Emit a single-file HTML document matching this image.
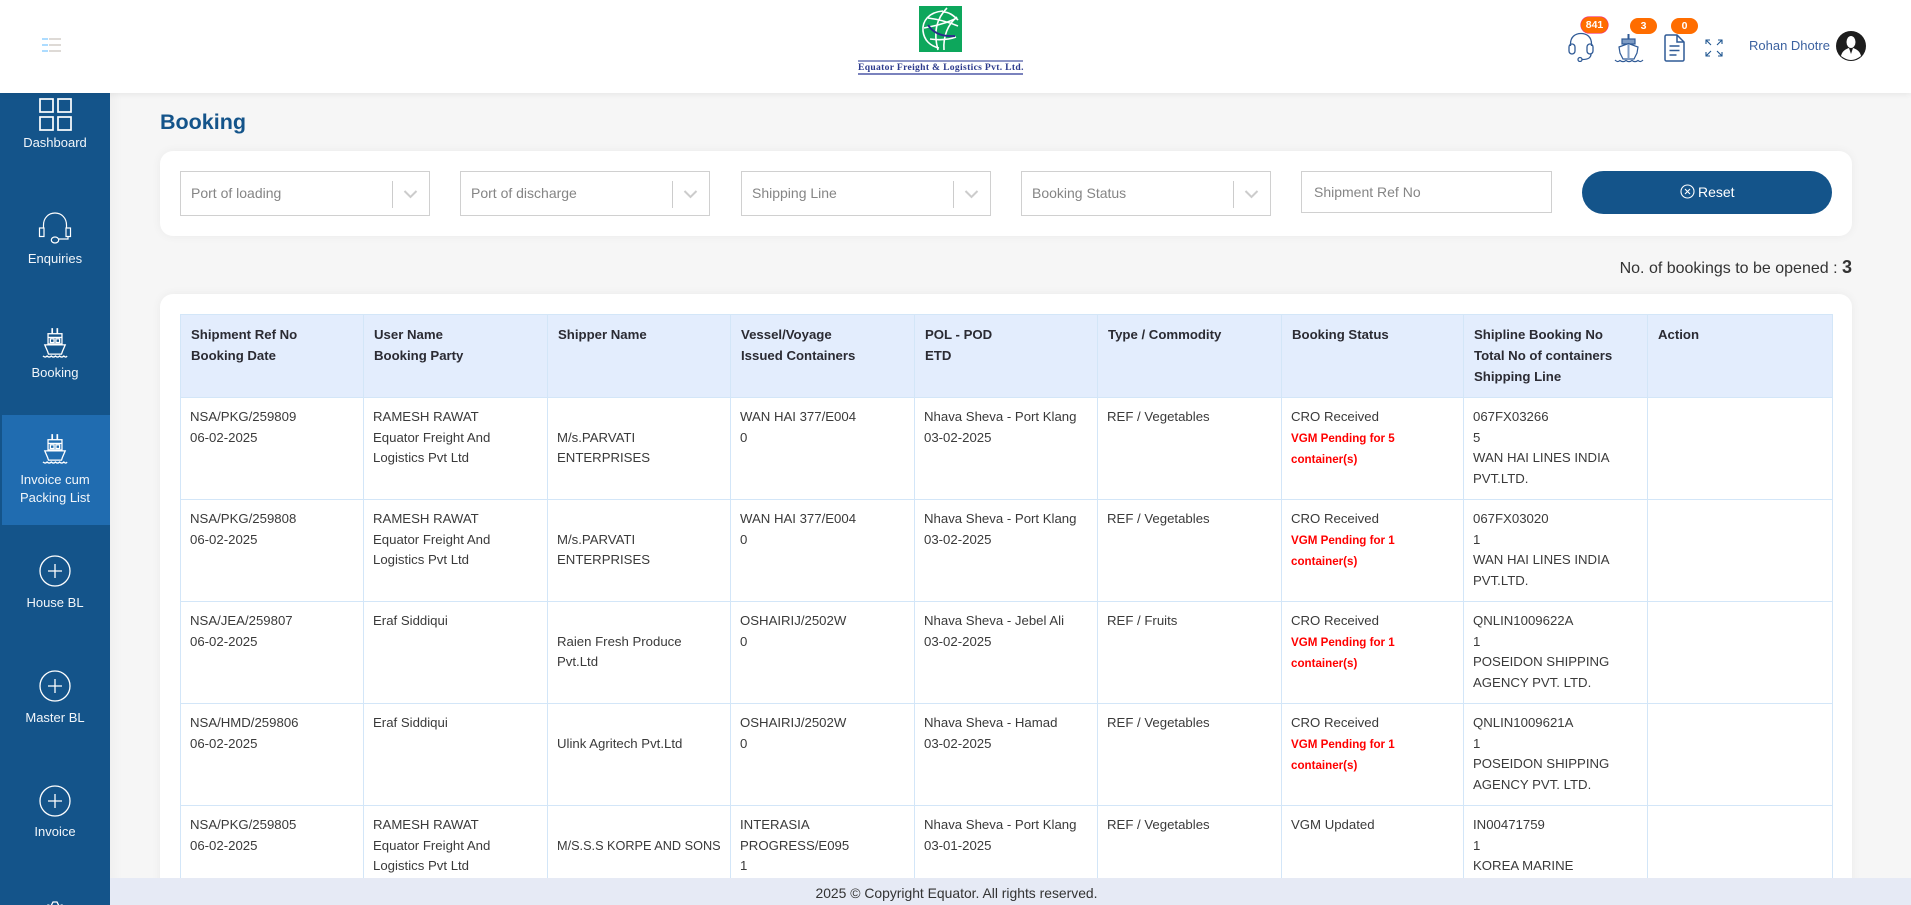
<!DOCTYPE html>
<html><head><meta charset="utf-8"><title>Booking</title>
<style>
*{box-sizing:border-box}
html,body{margin:0;padding:0;width:1911px;height:905px;overflow:hidden;background:#f6f6f6;font-family:"Liberation Sans",sans-serif;color:#333}
#wrap{position:absolute;left:0;top:0;width:1911px;height:905px;overflow:hidden}
#clip{position:absolute;left:0;top:0;width:1911px;height:878px;overflow:hidden}
.abs{position:absolute}
#hdr{position:absolute;left:0;top:0;width:1911px;height:93px;background:#fff;box-shadow:0 1px 6px rgba(0,0,0,.07);z-index:5}
#side{position:absolute;left:0;top:93px;width:110px;height:812px;background:#14548a;overflow:hidden;z-index:4}
.lbl{position:absolute;left:0;width:110px;text-align:center;color:#f2f6fa;font-size:13px;line-height:18px;white-space:nowrap}
.card{position:absolute;left:160px;width:1692px;background:#fff;border-radius:13px;box-shadow:0 0 10px rgba(0,0,0,.05)}
.sel{position:absolute;top:171px;width:250px;height:45px;border:1px solid #d0d0d0;background:#fff;color:#858585;font-size:14px;line-height:43px;padding-left:10px}
.sel i{position:absolute;left:211px;top:9px;width:1px;height:27px;background:#ccc}
.sel svg{position:absolute;left:222px;top:18px}
#tbl{position:absolute;left:180px;top:314px;border-collapse:collapse;table-layout:fixed;width:1652px;font-size:13.2px}
#tbl td,#tbl th{border:1px solid #d3e6f8;vertical-align:top;white-space:nowrap;line-height:20.5px;overflow:hidden}
#tbl th{height:83px;background:#e3edfd;text-align:left;font-weight:bold;color:#2b2b33;padding:9px 10px 0 10px;line-height:21px;font-size:13.2px}
#tbl td{height:102px;padding:9px 9px 0 9px;color:#3a3a3a;background:#fff}
.r{color:#f00;font-weight:bold;font-size:11.6px}
.badge{position:absolute;width:27px;height:16px;border-radius:8px;background:#ff6d00;color:#fff;font-weight:bold;font-size:10.5px;line-height:16px;text-align:center}
#foot{position:absolute;left:110px;top:878px;width:1801px;height:27px;background:#e6eaf5;text-align:center;font-size:13.9px;line-height:30px;color:#333;z-index:3;padding-right:108px}
</style></head><body>
<div id="wrap">
<div class="abs" style="left:110px;top:93px;width:12px;height:812px;background:linear-gradient(90deg,#f0f0f0,#f6f6f6)"></div>

<div id="hdr">
  <svg class="abs" style="left:42px;top:38px" width="20" height="14"><g stroke-width="1.3"><path d="M0 1h6M0 7h6M0 13h6" stroke="#7cc8ff"/><path d="M7 1h12M7 7h12M7 13h12" stroke="#c9c4be"/></g></svg>

  <svg class="abs" style="left:919px;top:6px" width="43" height="46" viewBox="0 0 43 46">
    <rect width="43" height="46" fill="#0da75c"/>
    <g fill="none" stroke="#fff" stroke-width="1.6">
      <path d="M24 5C10 6 3 15 4 25c1 9 7 15 16 17"/>
      <path d="M9 12c8 1 18 3 30 8"/><path d="M5 22c10-2 20-4 31-9"/>
      <path d="M28 2C18 12 14 26 19 44"/><path d="M38 11C29 18 24 30 25 44"/>
      <path d="M11 33c8 1 18 1 26-2"/><path d="M24 6c6 0 10 3 15 8"/>
    </g>
    <path d="M9 19c6 9 15 12 27 11" fill="none" stroke="#2b2c8c" stroke-width="2"/>
  </svg>
  <div class="abs" style="left:858px;top:60px;width:165px;height:15px;border-top:2px solid #8f97c6;border-bottom:2px solid #7a82bd;color:#2c3a8c;font:bold 9.6px/12px 'Liberation Serif',serif;text-align:center;white-space:nowrap;letter-spacing:.32px">Equator Freight &amp; Logistics Pvt. Ltd.</div>

  <svg class="abs" style="left:1567px;top:32px" width="28" height="30" viewBox="0 0 28 30" fill="none" stroke="#2f5a96" stroke-width="1.3">
    <path d="M3.500 14V12C3.500 5 8 1.500 14 1.500S24.500 5 24.500 12v2"/><rect x="2" y="12" width="6" height="10" rx="3"/><rect x="20" y="12" width="6" height="10" rx="3"/><path d="M24 22c0 4-3 5.500-9 5.500"/><circle cx="13" cy="27.500" r="2"/>
  </svg>
  <div class="badge" style="left:1581px;top:17px;box-shadow:0 0 0 .6px #f0307a">841</div>

  <svg class="abs" style="left:1614px;top:33px" width="30" height="30" viewBox="0 0 30 30" fill="none" stroke="#2f5a96" stroke-width="1.2">
    <path d="M14.500 1v5" stroke-width="2"/><rect x="8" y="6" width="13" height="5" fill="#7f9cc4"/><path d="M5 14l9.500-3.500L24 14l-1 6-3 6H9l-3-6z"/><path d="M14.500 11v15" stroke="#7f9cc4" stroke-width="2"/><path d="M1 27c2 2 3 2 5 .5 2 1.500 4 1.500 6 0 2 1.500 4 1.500 6 0 2 1.500 4 1.500 6 0 2 1.500 3 1.500 5-.5"/>
  </svg>
  <div class="badge" style="left:1630px;top:18px">3</div>

  <svg class="abs" style="left:1664px;top:34px" width="21" height="28" viewBox="0 0 21 28" fill="none" stroke="#2f5a96" stroke-width="1.5">
    <path d="M2.500 1h10.500L20 8v17.500a1.500 1.500 0 0 1-1.500 1.500h-16A1.500 1.500 0 0 1 1 25.500V2.500A1.500 1.500 0 0 1 2.500 1z"/><path d="M13 1v7h7"/><path d="M5.500 12h10M5.500 16.500h10M5.500 21h7"/>
  </svg>
  <div class="badge" style="left:1671px;top:18px">0</div>

  <svg class="abs" style="left:1705px;top:39px" width="18" height="18" viewBox="0 0 18 18" fill="none" stroke="#1f5690" stroke-width="1.100">
    <path d="M1 5V1h4M1 1l5 5M13 1h4v4M17 1l-5 5M1 13v4h4M1 17l5-5M17 13v4h-4M17 17l-5-5"/>
  </svg>
  <div class="abs" style="left:1749px;top:37px;font-size:13px;line-height:18px;color:#3c62a0;white-space:nowrap">Rohan Dhotre</div>
  <svg class="abs" style="left:1836px;top:31px" width="30" height="30" viewBox="0 0 30 30">
    <circle cx="15" cy="15" r="15" fill="#1d1d1d"/><ellipse cx="15" cy="11" rx="4.500" ry="6" fill="#fff"/><path d="M5 25c1-5 5-7 8-8l2 6 2-6c3 1 7 3 8 8-3 2-6 4-10 4s-7-2-10-4z" fill="#fff"/>
  </svg>
</div>

<div id="side">
  <svg class="abs" style="left:39px;top:5px" width="33" height="33" viewBox="0 0 33 33" fill="none" stroke="#fff" stroke-width="1.700"><rect x="1" y="1" width="13" height="13"/><rect x="19" y="1" width="13" height="13"/><rect x="1" y="19" width="13" height="13"/><rect x="19" y="19" width="13" height="13"/></svg>
  <div class="lbl" style="top:41px">Dashboard</div>

  <svg class="abs" style="left:38px;top:119px" width="34" height="34" viewBox="0 0 34 34" fill="none" stroke="#fff" stroke-width="1.200"><path d="M5.500 16V13C5.500 6 10.500 1 17 1s11.500 5 11.500 12v3"/><rect x="1.500" y="16" width="4.500" height="8.500"/><rect x="28" y="16" width="4.500" height="8.500"/><path d="M30 24.500v2.500h-9"/><ellipse cx="17" cy="28" rx="3.700" ry="3"/></svg>
  <div class="lbl" style="top:157px">Enquiries</div>

  <svg class="abs" style="left:42px;top:234px" width="26" height="32" viewBox="0 0 28 34" fill="none" stroke="#fff" stroke-width="1.400"><path d="M11 1v6M16.500 1v6" stroke-width="1.800"/><rect x="6.500" y="7" width="15" height="11"/><path d="M6.500 11h15"/><rect x="9" y="12.500" width="4" height="4"/><rect x="15" y="12.500" width="4" height="4"/><path d="M3 19h22l-3 7-1 3H7l-1-3z"/><path d="M1 31c2 1.500 3 1.500 4.500 0 1.500 1.500 3 1.500 4.500 0 1.500 1.500 3 1.500 4.500 0 1.500 1.500 3 1.500 4.500 0 1.500 1.500 3 1.500 4.500 0 1.500 1.500 2.500 1.500 3.500 0"/></svg>
  <div class="lbl" style="top:271px">Booking</div>

  <div class="abs" style="left:2px;top:322px;width:108px;height:110px;background:#206cb0"></div>
  <svg class="abs" style="left:42px;top:340px" width="26" height="32" viewBox="0 0 28 34" fill="none" stroke="#fff" stroke-width="1.400"><path d="M11 1v6M16.500 1v6" stroke-width="1.800"/><rect x="6.500" y="7" width="15" height="11"/><path d="M6.500 11h15"/><rect x="9" y="12.500" width="4" height="4"/><rect x="15" y="12.500" width="4" height="4"/><path d="M3 19h22l-3 7-1 3H7l-1-3z"/><path d="M1 31c2 1.500 3 1.500 4.500 0 1.500 1.500 3 1.500 4.500 0 1.500 1.500 3 1.500 4.500 0 1.500 1.500 3 1.500 4.500 0 1.500 1.500 3 1.500 4.500 0 1.500 1.500 2.500 1.500 3.500 0"/></svg>
  <div class="lbl" style="top:378px">Invoice cum</div>
  <div class="lbl" style="top:396px">Packing List</div>

  <svg class="abs" style="left:39px;top:462px" width="32" height="32" viewBox="0 0 32 32" fill="none" stroke="#fff" stroke-width="1.300"><circle cx="16" cy="16" r="15"/><path d="M16 9v14M9 16h14"/></svg>
  <div class="lbl" style="top:501px">House BL</div>
  <svg class="abs" style="left:39px;top:577px" width="32" height="32" viewBox="0 0 32 32" fill="none" stroke="#fff" stroke-width="1.300"><circle cx="16" cy="16" r="15"/><path d="M16 9v14M9 16h14"/></svg>
  <div class="lbl" style="top:616px">Master BL</div>
  <svg class="abs" style="left:39px;top:692px" width="32" height="32" viewBox="0 0 32 32" fill="none" stroke="#fff" stroke-width="1.300"><circle cx="16" cy="16" r="15"/><path d="M16 9v14M9 16h14"/></svg>
  <div class="lbl" style="top:730px">Invoice</div>
  <svg class="abs" style="left:44px;top:807px" width="22" height="12" viewBox="0 0 22 12" fill="none" stroke="#fff" stroke-width="1.300"><path d="M1 8l3-3 3 1 2-4h4l2 4 3-1 3 3"/></svg>
</div>

<div class="abs" style="left:160px;top:109px;font-size:21.500px;font-weight:bold;line-height:26px;color:#14548a">Booking</div>

<div class="card" style="top:151px;height:85px"></div>
<div class="sel" style="left:180px">Port of loading<i></i><svg width="15" height="9" viewBox="0 0 15 9" fill="none" stroke="#ccc" stroke-width="2"><path d="M1.500 1l6 6 6-6"/></svg></div>
<div class="sel" style="left:460px">Port of discharge<i></i><svg width="15" height="9" viewBox="0 0 15 9" fill="none" stroke="#ccc" stroke-width="2"><path d="M1.500 1l6 6 6-6"/></svg></div>
<div class="sel" style="left:741px">Shipping Line<i></i><svg width="15" height="9" viewBox="0 0 15 9" fill="none" stroke="#ccc" stroke-width="2"><path d="M1.500 1l6 6 6-6"/></svg></div>
<div class="sel" style="left:1021px">Booking Status<i></i><svg width="15" height="9" viewBox="0 0 15 9" fill="none" stroke="#ccc" stroke-width="2"><path d="M1.500 1l6 6 6-6"/></svg></div>
<div class="sel" style="left:1301px;width:251px;height:42px;line-height:41px;padding-left:12px">Shipment Ref No</div>

<div class="abs" style="left:1582px;top:171px;width:250px;height:43px;border-radius:22px;background:#14548a;color:#fff;font-size:14px;line-height:42px;padding-left:116px">Reset</div>
<svg class="abs" style="left:1680px;top:184px" width="15" height="15" viewBox="0 0 15 15" fill="none" stroke="#fff" stroke-width="1.100"><circle cx="7.500" cy="7.500" r="6.500"/><path d="M5 5l5 5M10 5l-5 5"/></svg>

<div class="abs" style="right:59px;top:256px;font-size:16px;line-height:22px;white-space:nowrap">No. of bookings to be opened : <b style="font-size:18px">3</b></div>

<div id="clip">
<div class="card" style="top:294px;height:620px"></div>
<table id="tbl">
<colgroup><col style="width:183px"><col style="width:184px"><col style="width:183px"><col style="width:184px"><col style="width:183px"><col style="width:184px"><col style="width:182px"><col style="width:184px"><col style="width:185px"></colgroup>
<tr><th>Shipment Ref No<br>Booking Date</th><th>User Name<br>Booking Party</th><th>Shipper Name</th><th>Vessel/Voyage<br>Issued Containers</th><th>POL - POD<br>ETD</th><th>Type / Commodity</th><th>Booking Status</th><th>Shipline Booking No<br>Total No of containers<br>Shipping Line</th><th>Action</th></tr>
<tr><td>NSA/PKG/259809<br>06-02-2025</td><td>RAMESH RAWAT<br>Equator Freight And<br>Logistics Pvt Ltd</td><td><br>M/s.PARVATI<br>ENTERPRISES</td><td>WAN HAI 377/E004<br>0</td><td>Nhava Sheva - Port Klang<br>03-02-2025</td><td>REF / Vegetables</td><td>CRO Received<br><span class="r">VGM Pending for 5<br>container(s)</span></td><td>067FX03266<br>5<br>WAN HAI LINES INDIA<br>PVT.LTD.</td><td></td></tr>
<tr><td>NSA/PKG/259808<br>06-02-2025</td><td>RAMESH RAWAT<br>Equator Freight And<br>Logistics Pvt Ltd</td><td><br>M/s.PARVATI<br>ENTERPRISES</td><td>WAN HAI 377/E004<br>0</td><td>Nhava Sheva - Port Klang<br>03-02-2025</td><td>REF / Vegetables</td><td>CRO Received<br><span class="r">VGM Pending for 1<br>container(s)</span></td><td>067FX03020<br>1<br>WAN HAI LINES INDIA<br>PVT.LTD.</td><td></td></tr>
<tr><td>NSA/JEA/259807<br>06-02-2025</td><td>Eraf Siddiqui</td><td><br>Raien Fresh Produce<br>Pvt.Ltd</td><td>OSHAIRIJ/2502W<br>0</td><td>Nhava Sheva - Jebel Ali<br>03-02-2025</td><td>REF / Fruits</td><td>CRO Received<br><span class="r">VGM Pending for 1<br>container(s)</span></td><td>QNLIN1009622A<br>1<br>POSEIDON SHIPPING<br>AGENCY PVT. LTD.</td><td></td></tr>
<tr><td>NSA/HMD/259806<br>06-02-2025</td><td>Eraf Siddiqui</td><td><br>Ulink Agritech Pvt.Ltd</td><td>OSHAIRIJ/2502W<br>0</td><td>Nhava Sheva - Hamad<br>03-02-2025</td><td>REF / Vegetables</td><td>CRO Received<br><span class="r">VGM Pending for 1<br>container(s)</span></td><td>QNLIN1009621A<br>1<br>POSEIDON SHIPPING<br>AGENCY PVT. LTD.</td><td></td></tr>
<tr><td>NSA/PKG/259805<br>06-02-2025</td><td>RAMESH RAWAT<br>Equator Freight And<br>Logistics Pvt Ltd</td><td><br><span style="font-size:12.700px">M/S.S.S KORPE AND SONS</span></td><td>INTERASIA<br>PROGRESS/E095<br>1</td><td>Nhava Sheva - Port Klang<br>03-01-2025</td><td>REF / Vegetables</td><td>VGM Updated</td><td>IN00471759<br>1<br>KOREA MARINE<br>TRANSPORT</td><td></td></tr>
</table>
</div>

<div id="foot">2025 © Copyright Equator. All rights reserved.</div>
</div>
</body></html>
